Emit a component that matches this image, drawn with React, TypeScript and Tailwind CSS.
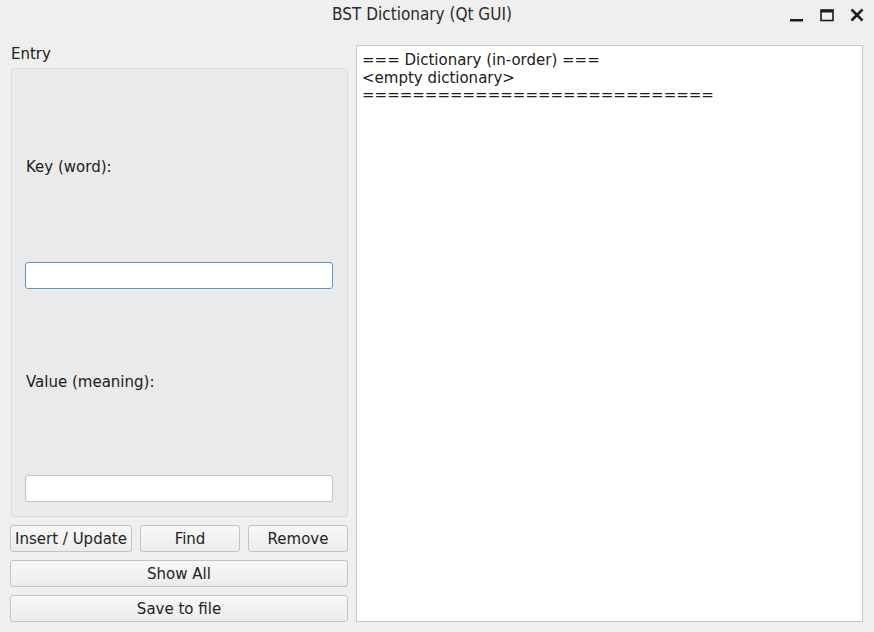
import React from 'react';

const font = { fontFamily: '"DejaVu Sans", sans-serif' };

const Button = ({ label, className = '' }: { label: string; className?: string }) => (
    <button
        className={`h-[27px] rounded-[3px] border border-[#c4c4c4] bg-gradient-to-b from-[#f8f8f8] to-[#ececec] text-[15px] leading-[18px] text-[#232323] ${className}`}
    >
        {label}
    </button>
);

const TitleBar = () => (
    <div className="relative flex h-[30px] items-center justify-center pr-[30px]">
        <span className="text-[17px] text-[#2a2a2a]" style={{ fontFamily: '"DejaVu Sans Condensed", "DejaVu Sans", sans-serif' }}>
            BST Dictionary (Qt GUI)
        </span>
        <div className="absolute right-[10px] top-[8px] flex items-center gap-[16px]">
            <svg width="14" height="14" viewBox="0 0 14 14">
                <rect x="0" y="11" width="13" height="2.5" fill="#1a1a1a" />
            </svg>
            <svg width="14" height="14" viewBox="0 0 14 14">
                <rect x="1" y="2" width="12" height="10.5" fill="none" stroke="#1a1a1a" strokeWidth="1.6" />
                <rect x="1" y="2" width="12" height="2.5" fill="#1a1a1a" />
            </svg>
            <svg width="14" height="14" viewBox="0 0 14 14">
                <path d="M1.5 1.5 L12.5 12.5 M12.5 1.5 L1.5 12.5" stroke="#1a1a1a" strokeWidth="2.6" />
            </svg>
        </div>
    </div>
);

export default function App() {
    return (
        <div className="flex h-[632px] w-[874px] flex-col bg-[#efefef] text-[#202020]" style={font}>
            <TitleBar />
            <div className="flex flex-1 gap-[8px] pb-[10px] pl-[10px] pr-[11px] pt-[15px]">
                {/* left side */}
                <div className="flex w-[338px] flex-col">
                    <div className="mt-[1px] pl-[1px] text-[15px] leading-[17px]">Entry</div>
                    <div className="ml-[1px] mt-[5px] flex h-[449px] flex-col rounded-[3px] border border-[#dadada] bg-[#eaeaea] pl-[13px] pr-[14px]">
                        <div className="mt-[90px] pl-[1px] text-[15px] leading-[16px]">Key (word):</div>
                        <div className="mt-[87px] h-[27px] rounded-[3px] border border-[#5f96c6] bg-white" />
                        <div className="mt-[85px] pl-[1px] text-[15px] leading-[16px]">Value (meaning):</div>
                        <div className="mt-[85px] h-[27px] rounded-[3px] border border-[#c2c2c2] bg-white" />
                    </div>
                    <div className="mt-[8px] flex gap-[8px]">
                        <Button label="Insert / Update" className="w-[122px]" />
                        <Button label="Find" className="w-[100px]" />
                        <Button label="Remove" className="w-[100px]" />
                    </div>
                    <Button label="Show All" className="mt-[8px] w-full" />
                    <Button label="Save to file" className="mt-[8px] w-full" />
                </div>
                {/* output */}
                <div className="flex-1 border border-[#c9c9c9] bg-white px-[5px] pt-[6px] text-[15px] leading-[17.5px]">
                    <div>=== Dictionary (in-order) ===</div>
                    <div>&lt;empty dictionary&gt;</div>
                    <div>============================</div>
                </div>
            </div>
        </div>
    );
}
